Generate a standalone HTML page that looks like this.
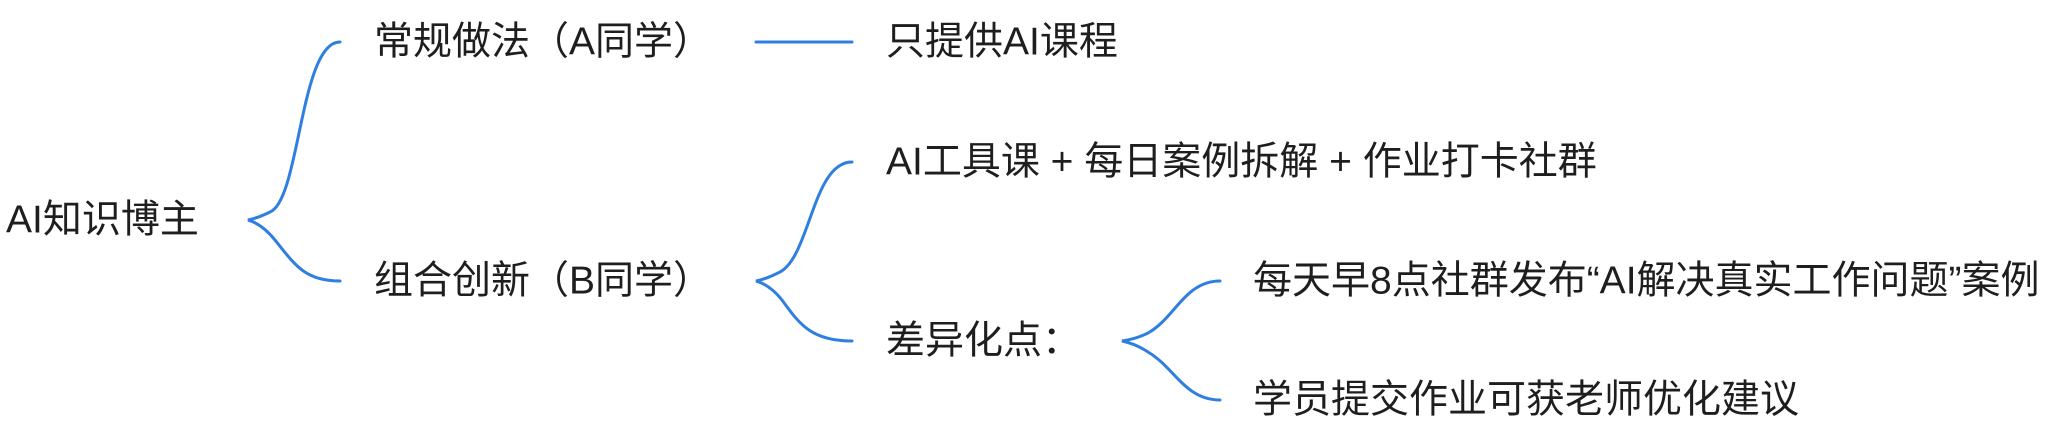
<!DOCTYPE html>
<html><head><meta charset="utf-8"><style>
html,body{margin:0;padding:0;background:#fff;}
svg{display:block;}
text{font-family:"Liberation Sans","Noto Sans CJK SC",sans-serif;font-size:39px;fill:#1e1e1e;dominant-baseline:central;}
path{fill:none;stroke:#2f7fe0;stroke-width:3;stroke-linecap:round;}
</style></head><body>
<svg width="2072" height="440" viewBox="0 0 2072 440">
<text x="6" y="220">AI知识博主</text>
<path d="M340,42 C300,42 300,200 270,212 Q258,218 248,220 Q262,224 275,240 C295,265 305,281 340,281"/>
<text x="374" y="42">常规做法（A同学）</text>
<path d="M756,42 L852,42"/>
<text x="886" y="42">只提供AI课程</text>
<text x="374" y="281">组合创新（B同学）</text>
<path d="M852,162 C812,162 810,260 778,273 Q766,279 756,281 Q770,285 782,300 C800,325 812,341 852,341"/>
<text x="886" y="162">AI工具课 + 每日案例拆解 + 作业打卡社群</text>
<text x="886" y="341">差异化点：</text>
<path d="M1220,281 C1185,281 1175,318 1148,333 Q1136,339 1122,341 Q1136,344 1148,352 C1175,368 1185,400 1220,400"/>
<text x="1253" y="281">每天早8点社群发布“AI解决真实工作问题”案例</text>
<text x="1253" y="400">学员提交作业可获老师优化建议</text>
</svg>
</body></html>
